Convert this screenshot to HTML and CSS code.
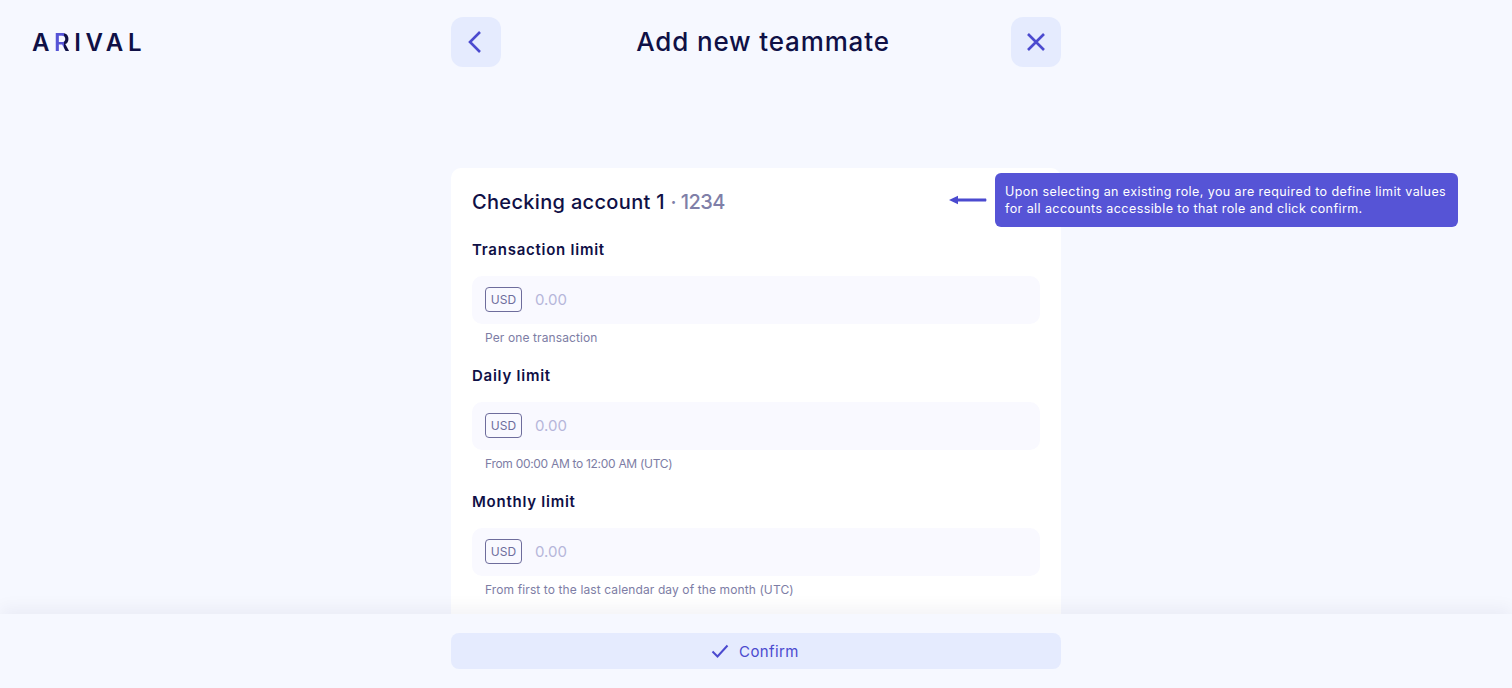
FILE: index.html
```html
<!DOCTYPE html>
<html lang="en">
<head>
  <meta charset="UTF-8" />
  <meta name="viewport" content="width=device-width, initial-scale=1.0"/>
  <title>Add new teammate</title>
  <link rel="stylesheet" href="styles.css">
</head>
<body>

  <div class="page">
    <div class="content">
      <header class="top">
        <div class="logo">A<span class="logo-r">R</span>IVAL</div>
        <div class="top-bar">
          <button class="icon-btn" aria-label="Back">
            <svg width="50" height="50" viewBox="0 0 50 50"><path d="M29 15 L19 25 L29 35"/></svg>
          </button>
          <h1>Add new teammate</h1>
          <button class="icon-btn" aria-label="Close">
            <svg width="50" height="50" viewBox="0 0 50 50"><path d="M17 17 L33 33 M33 17 L17 33"/></svg>
          </button>
        </div>
      </header>

      <main class="card">
        <h2>Checking account 1 <span class="acc-num">· 1234</span></h2>

        <div class="limit">
          <h3>Transaction limit</h3>
          <div class="field"><span class="cur">USD</span><span class="amount">0.00</span></div>
          <p class="hint">Per one transaction</p>
        </div>

        <div class="limit">
          <h3>Daily limit</h3>
          <div class="field"><span class="cur">USD</span><span class="amount">0.00</span></div>
          <p class="hint hint-tight">From 00:00 AM to 12:00 AM (UTC)</p>
        </div>

        <div class="limit">
          <h3>Monthly limit</h3>
          <div class="field"><span class="cur">USD</span><span class="amount">0.00</span></div>
          <p class="hint">From first to the last calendar day of the month (UTC)</p>
        </div>

        <div class="note">
          <svg class="note-arrow" width="38" height="10" viewBox="0 0 38 10"><path d="M0 5 L9 .8 L9 3.4 L37 3.4 Q38 5 37 6.6 L9 6.6 L9 9.2 Z"/></svg>
          <div class="note-box">Upon selecting an existing role, you are required to define limit values for all accounts accessible to that role and click confirm.</div>
        </div>
      </main>
    </div>

    <footer class="bottom">
      <button class="confirm">
        <svg width="18" height="14" viewBox="0 0 18 14"><path d="M1.5 7.5 L6.5 12.5 L16.5 1.5"/></svg>
        Confirm
      </button>
    </footer>
  </div>

</body>
</html>
```

FILE: styles.css
```css
* {
  box-sizing: border-box;
}

body {
  font-family: 'Inter', 'Liberation Sans', sans-serif;
  background: #f6f8ff;
  color: #0f1046;
  margin: 0;
}

.page {
  height: 100vh;
  overflow: hidden;
  display: flex;
  flex-direction: column;
}

.content {
  flex: 1;
  min-height: 0;
  overflow: hidden;
}

.top {
  display: grid;
  grid-template-columns: 451px 610px;
  padding-top: 17px;
  height: 168px;
}

.logo {
  padding: 12px 0 0 32px;
  font-size: 24px;
  line-height: 28px;
  font-weight: 600;
  letter-spacing: 4.6px;
}

.logo-r {
  background: linear-gradient(90deg, #5654d6 50%, #0f1046 50%);
  -webkit-background-clip: text;
  background-clip: text;
  color: transparent;
}

.top-bar {
  display: flex;
  justify-content: space-between;
  align-items: flex-start;
}

.top-bar h1 {
  margin: 0;
  padding-left: 14px;
  font-size: 26px;
  line-height: 50px;
  font-weight: 500;
  letter-spacing: 0.85px;
}

.icon-btn {
  width: 50px;
  height: 50px;
  padding: 0;
  border: 0;
  border-radius: 12px;
  background: #e5ebfe;
}

.icon-btn svg {
  display: block;
}

.icon-btn path {
  fill: none;
  stroke: #4b4acf;
  stroke-width: 2.6;
}

.card {
  position: relative;
  width: 610px;
  margin-left: 451px;
  padding: 21px 21px 0;
  background: white;
  border-radius: 10px 10px 0 0;
  height: 446px;
}

.card h2 {
  margin: 0 0 25px;
  font-size: 20px;
  line-height: 26px;
  font-weight: 500;
  letter-spacing: 0.33px;
}

.acc-num {
  color: #7f7fa8;
  letter-spacing: -0.6px;
}

.limit {
  height: 126px;
}

.limit h3 {
  margin: 0 0 16px;
  font-size: 15px;
  line-height: 20px;
  font-weight: 600;
  letter-spacing: 0.75px;
}

.field {
  display: flex;
  align-items: center;
  gap: 13px;
  height: 48px;
  padding: 0 0 1px 13px;
  background: #f9f9ff;
  border-radius: 10px;
}

.cur {
  width: 37px;
  height: 25px;
  border: 1px solid #6e6d9c;
  border-radius: 4px;
  font-size: 12px;
  line-height: 23px;
  text-align: center;
  color: #6e6d9c;
}

.amount {
  font-size: 15px;
  color: #b6b6da;
}

.hint {
  margin: 6px 0 0 13px;
  font-size: 12px;
  line-height: 16px;
  letter-spacing: 0.11px;
  color: #7d7da5;
}

.hint-tight {
  letter-spacing: -0.3px;
}

.note {
  position: absolute;
  left: 498px;
  top: 5px;
  display: flex;
  align-items: center;
  gap: 8px;
}

.note-arrow {
  flex: none;
}

.note-arrow path {
  fill: #4b4acf;
}

.note-box {
  width: 463px;
  height: 54px;
  padding: 10px 6px 0 10px;
  background: #5654d6;
  border-radius: 6px;
  color: white;
  font-size: 12.5px;
  line-height: 17px;
  letter-spacing: 0.42px;
}

.bottom {
  position: relative;
  height: 74px;
  padding: 19px 451px 0;
  background: #f6f8ff;
  box-shadow: 0 -6px 16px rgba(15, 16, 70, 0.05);
}

.confirm {
  display: flex;
  align-items: center;
  justify-content: center;
  gap: 10px;
  width: 100%;
  height: 36px;
  padding: 0 2px 0 0;
  border: 0;
  border-radius: 8px;
  background: #e5ebfe;
  color: #4b4acf;
  font-family: inherit;
  font-size: 15px;
  letter-spacing: 0.4px;
}

.confirm path {
  fill: none;
  stroke: #4b4acf;
  stroke-width: 2;
}
```
